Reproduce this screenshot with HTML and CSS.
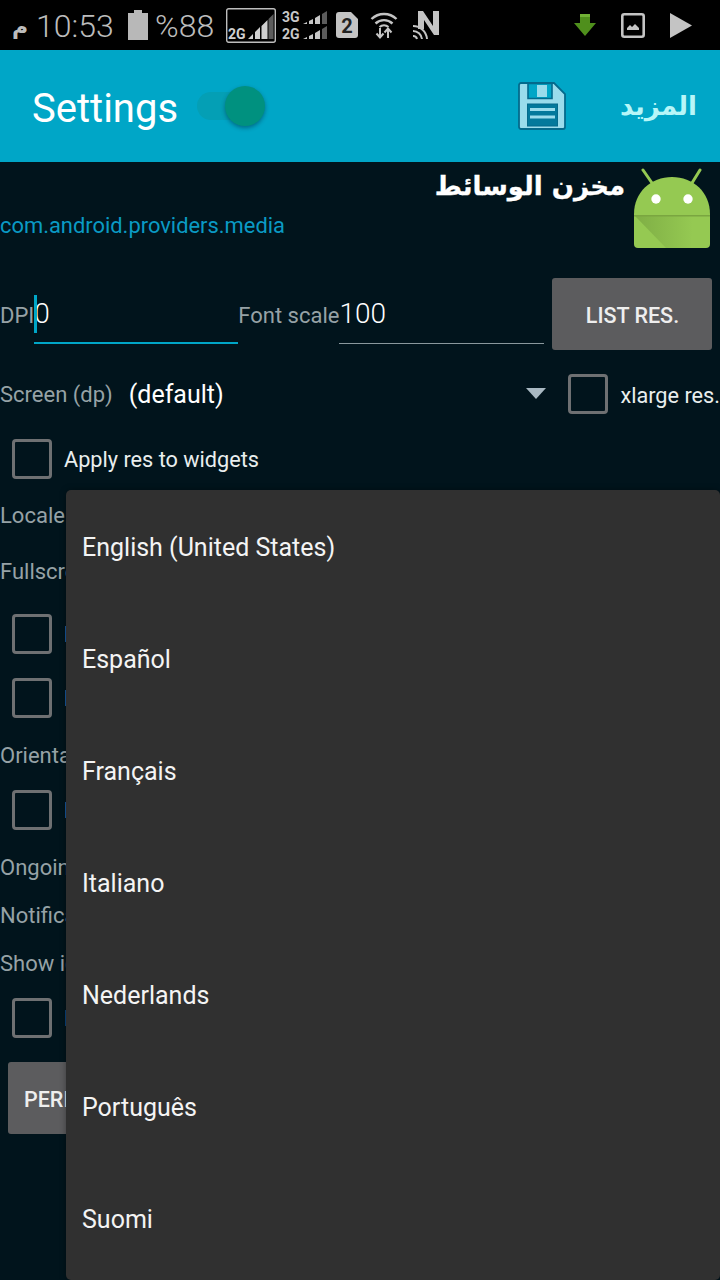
FILE: index.html
```html
<!DOCTYPE html>
<html lang="en">
<head>
<meta charset="utf-8">
<title>Settings</title>
<link rel="stylesheet" href="styles.css">
</head>
<body>
<div class="screen">
  <div class="status">
    <span class="ampm" dir="rtl">م</span>
    <span class="clock">10:53</span>
    <svg class="st bat" width="20" height="30" viewBox="0 0 20 30"><path d="M6 0h8v3h6v27H0V3h6z" fill="#b8b8b8"/></svg>
    <span class="pct">%88</span>
    <svg class="st sig1" width="50" height="35" viewBox="0 0 50 35">
      <rect x=".7" y=".7" width="48.6" height="33.6" rx="2" fill="none" stroke="#bdbdbd" stroke-width="1.4"/>
      <text x="2" y="31" class="g1">2G</text>
      <path d="M22 31l5-5v5zM29 31v-7l5-5v12zM35.500 31V18l6-6v19z" fill="#cfcfcf"/>
      <path d="M42.500 31V11l5-5v25z" fill="#5c5c5c"/>
    </svg>
    <svg class="st sig2" width="46" height="34" viewBox="0 -2 46 34">
      <text x="0" y="12" class="g2">3G</text>
      <text x="0" y="29" class="g2">2G</text>
      <path d="M21 14l4-2v2zM27 14v-3l4-2v5zM33 14V8l5-3v9z" fill="#c8c8c8"/>
      <path d="M40 14V4l5-3v13z" fill="#5c5c5c"/>
      <path d="M21 29l4-2v2zM27 29v-3l4-2v5zM33 29v-6l5-3v9z" fill="#c8c8c8"/>
      <path d="M40 29V19l5-3v13z" fill="#5c5c5c"/>
    </svg>
    <svg class="st sim" width="22" height="26" viewBox="0 0 22 26">
      <path d="M3 0h12l7 7v16a3 3 0 0 1-3 3H3a3 3 0 0 1-3-3V3a3 3 0 0 1 3-3z" fill="#c4c4c4"/>
      <text x="11" y="21" text-anchor="middle" class="s2">2</text>
    </svg>
    <svg class="st wifi" width="28" height="30" viewBox="0 0 28 30" fill="none" stroke="#c4c4c4">
      <path d="M1.500 9a18 18 0 0 1 25 0" stroke-width="2.400"/>
      <path d="M5.500 13.500a12.500 12.500 0 0 1 17 0" stroke-width="2.400"/>
      <path d="M9.500 17a7 7 0 0 1 9 0" stroke-width="2.200"/>
      <path d="M10 18v9M6.500 23.500l3.500 4 3.500-4M18 28v-9M14.500 22.500l3.500-4 3.500 4" stroke-width="2"/>
    </svg>
    <svg class="st nfc" width="26" height="29" viewBox="0 0 26 29">
      <path d="M5 0h5l10 15V0h6v24h-5L11 9v9H5z" fill="#c4c4c4"/>
      <path d="M0 15a14 14 0 0 1 14 13M0 20a9 9 0 0 1 9 8M0 25a4 4 0 0 1 4 3" fill="none" stroke="#c4c4c4" stroke-width="2"/>
    </svg>
    <svg class="st dl" width="22" height="22" viewBox="0 0 22 22"><path d="M6 0h10v9h6L11 22 0 9h6z" fill="#4f8f1c"/><path d="M6 0h10v3H6z" fill="#71b135"/></svg>
    <svg class="st pic" width="24" height="25" viewBox="0 0 24 25">
      <rect x="1.300" y="1.300" width="21.400" height="22.400" rx="2" fill="none" stroke="#c4c4c4" stroke-width="2.600"/>
      <path d="M6 17v-2l3-3 2 2 3-3 4 4v2z" fill="#c4c4c4"/>
    </svg>
    <svg class="st play" width="22" height="25" viewBox="0 0 22 25"><path d="M0 0l22 12.500L0 25z" fill="#c4c4c4"/></svg>
  </div>

  <header class="appbar">
    <span class="title">Settings</span>
    <span class="toggle"><span class="thumb"></span></span>
    <svg class="save" width="48" height="48" viewBox="0 0 48 48">
      <path d="M3 1h33l11 11v33a2 2 0 0 1-2 2H3a2 2 0 0 1-2-2V3a2 2 0 0 1 2-2z" fill="#9adcec" stroke="#046a8c" stroke-width="1.800"/>
      <path d="M10 1.500h24v15H10z" fill="#00a6c7" stroke="#046a8c" stroke-width="1.600"/>
      <rect x="19" y="3" width="10" height="12" fill="#9adcec"/>
      <rect x="9.500" y="22" width="30" height="22" fill="#03799c" stroke="#046a8c"/>
      <path d="M12 27.500h25M12 35h25" stroke="#9adcec" stroke-width="3"/>
    </svg>
    <span class="more" dir="rtl">المزيد</span>
  </header>

  <main class="content">
    <section class="apphead">
      <div class="appnames">
        <div class="appname" dir="rtl">مخزن الوسائط</div>
        <div class="pkg">com.android.providers.media</div>
      </div>
      <svg class="droid" width="80" height="82" viewBox="0 0 80 82">
        <defs>
          <linearGradient id="fold" x1="0" y1="0" x2="1" y2="0">
            <stop offset="0" stop-color="#7fae45"/>
            <stop offset="1" stop-color="#95c952"/>
          </linearGradient>
        </defs>
        <path d="M10 2l9 13M67 2l-8 13" stroke="#95c952" stroke-width="3" stroke-linecap="round"/>
        <path d="M1 46C1 24 18 9 39 9s38 15 38 37v30a4 4 0 0 1-4 4H5a4 4 0 0 1-4-4z" fill="#95c952"/>
        <path d="M2 48h58l-2 32H33z" fill="url(#fold)"/>
        <path d="M1 47h76v1.500H1z" fill="#7aa640"/>
        <circle cx="23" cy="31" r="4.700" fill="#fff"/><circle cx="55" cy="31" r="4.700" fill="#fff"/>
      </svg>
    </section>

    <section class="inputs">
      <span class="label">DPI</span>
      <div class="field focused"><span class="caret"></span>0</div>
      <span class="label">Font scale</span>
      <div class="field">100</div>
      <div class="btn list">LIST RES.</div>
    </section>

    <section class="screenrow">
      <span class="label">Screen (dp)</span>
      <span class="spin">(default)</span>
      <span class="arrow"></span>
      <span class="box"></span>
      <span class="check-text">xlarge res.</span>
    </section>

    <div class="check apply"><span class="box"></span><span class="check-text">Apply res to widgets</span></div>
    <div class="label locale">Locale</div>
    <div class="label full">Fullscreen</div>
    <div class="check c1"><span class="box"></span><span class="check-text">Hide</span></div>
    <div class="check c2"><span class="box"></span><span class="check-text">Hide</span></div>
    <div class="label orient">Orientat</div>
    <div class="check c3"><span class="box"></span><span class="check-text">Lock</span></div>
    <div class="label ongoing">Ongoing</div>
    <div class="label notif">Notification</div>
    <div class="label showi">Show icon</div>
    <div class="check c4"><span class="box"></span><span class="check-text">Il</span></div>
    <div class="btn perm">PERM</div>
  </main>

  <ul class="popup">
    <li>English (United States)</li>
    <li>Español</li>
    <li>Français</li>
    <li>Italiano</li>
    <li>Nederlands</li>
    <li>Português</li>
    <li>Suomi</li>
  </ul>
</div>
</body>
</html>
```
FILE: styles.css
```css
* { box-sizing: border-box; }
html, body { margin: 0; padding: 0; background: #01141c; }
.screen {
  position: relative;
  width: 720px;
  height: 1280px;
  overflow: hidden;
  font-family: Roboto, "DejaVu Sans", sans-serif;
  color: #fff;
  background: #01141c;
}
.status {
  display: flex;
  align-items: center;
  height: 50px;
  background: #000;
  color: #bcbcbc;
  padding-left: 8px;
}
.st { flex: none; display: block; }
.ampm { width: 20px; font: bold 22px "DejaVu Sans", sans-serif; line-height: 30px; position: relative; top: 2px; }
.clock { margin-left: 8px; width: 78px; font-size: 32px; font-weight: 300; position: relative; top: 1px; white-space: nowrap; }
.bat { margin-left: 14px; }
.pct { margin-left: 7px; width: 58px; font-size: 32px; font-weight: 300; position: relative; top: 1px; }
.sig1 { margin-left: 13px; }
.sig2 { margin-left: 6px; }
.sim { margin-left: 8px; }
.wifi { margin-left: 12px; }
.nfc { margin-left: 15px; }
.dl { margin-left: 135px; }
.pic { margin-left: 25px; }
.play { margin-left: 25px; }
.g1 { font: bold 14px Roboto, sans-serif; fill: #d0d0d0; }
.g2 { font: bold 14px Roboto, sans-serif; fill: #c8c8c8; }
.s2 { font: bold 20px Roboto, sans-serif; fill: #222; }

.appbar {
  display: flex;
  align-items: center;
  height: 112px;
  background: #00a6c7;
  padding-left: 32px;
}
.title { width: 165px; font-size: 40px; line-height: 1; position: relative; top: 3px; white-space: nowrap; }
.toggle { position: relative; width: 60px; height: 28px; border-radius: 14px; background: #049fb5; flex: none; }
.thumb {
  position: absolute;
  right: -8px;
  top: -6px;
  width: 40px;
  height: 40px;
  border-radius: 50%;
  background: #00917f;
  box-shadow: 0 2px 4px rgba(0, 40, 60, .45);
}
.save { margin-left: 261px; flex: none; }
.more {
  margin-left: 56px;
  width: 75px;
  font: bold 26px "DejaVu Sans", sans-serif;
  color: #b7f6f8;
  white-space: nowrap;
}

.apphead { display: flex; height: 92px; padding: 6px 8px 0 0; justify-content: space-between; }
.appnames { flex: 1; }
.appname {
  font: bold 26px "DejaVu Sans", sans-serif;
  line-height: 36px;
  text-align: right;
  margin-right: 8px;
  -webkit-text-stroke: .3px #fff;
  white-space: nowrap;
}
.pkg { margin-top: 7px; font-size: 21.900px; line-height: 30px; color: #0a9ac4; white-space: nowrap; }
.droid { flex: none; margin-top: 0; margin-right: -1px; }

.label { font-size: 22px; color: #96a2a6; line-height: 30px; white-space: nowrap; }
.inputs { display: flex; align-items: center; height: 72px; margin-top: 24px; }
.field {
  position: relative;
  height: 62px;
  margin-top: -3px;
  font-size: 28px;
  font-weight: 300;
  line-height: 64px;
  border-bottom: 1px solid #8a989d;
  width: 205px;
}
.field.focused { width: 204px; border-bottom: 2px solid #00a6c7; margin-top: -2px; }
.caret { position: absolute; left: 0; top: 13px; width: 3px; height: 38px; background: #00a6c7; }
.inputs .label { position: relative; top: 2px; }
.btn {
  display: flex;
  align-items: center;
  justify-content: center;
  height: 72px;
  padding-top: 3px;
  border-radius: 3px;
  background: #5c5c5e;
  font-size: 21.500px;
  font-weight: 500;
  color: #eee;
  white-space: nowrap;
}
.list { width: 160px; margin-left: 8px; }
.screenrow { display: flex; align-items: center; height: 40px; margin-top: 25px; }
.spin { margin-left: 16px; width: 397px; font-size: 25px; line-height: 40px; }
.arrow { width: 0; height: 0; border: 10px solid transparent; border-top: 11px solid #a9b9c2; border-bottom: 0; position: relative; top: -2px; left: 1px; }
.box {
  display: block;
  flex: none;
  width: 40px;
  height: 40px;
  border: 3px solid #6e7072;
  border-radius: 4px;
}
.screenrow .box { margin-left: 23px; position: relative; top: -1px; }
.check-text { font-size: 21.700px; color: #e9eeee; white-space: nowrap; margin-left: 12px; }
.check { display: flex; align-items: center; height: 40px; padding-left: 12px; }
.apply { margin-top: 24px; }
.locale { margin-top: 22px; }
.full { margin-top: 26px; }
.c1 { margin-top: 27px; }
.c2 { margin-top: 24px; }
.orient { margin-top: 23px; }
.c3 { margin-top: 19px; }
.ongoing { margin-top: 23px; }
.notif { margin-top: 18px; }
.showi { margin-top: 18px; }
.c4 { margin-top: 19px; }
.perm { width: 160px; margin: 24px 0 0 8px; justify-content: flex-start; padding-left: 16px; }

.popup {
  position: absolute;
  left: 66px;
  top: 490px;
  width: 654px;
  height: 790px;
  margin: 0;
  padding: 1px 0 0;
  list-style: none;
  background: #303030;
  border-radius: 5px;
  box-shadow: 0 0 6px rgba(0, 0, 0, .35);
}
.popup li {
  display: flex;
  align-items: center;
  height: 112px;
  padding-left: 16px;
  font-size: 25px;
  color: #f4f4f4;
}
```
